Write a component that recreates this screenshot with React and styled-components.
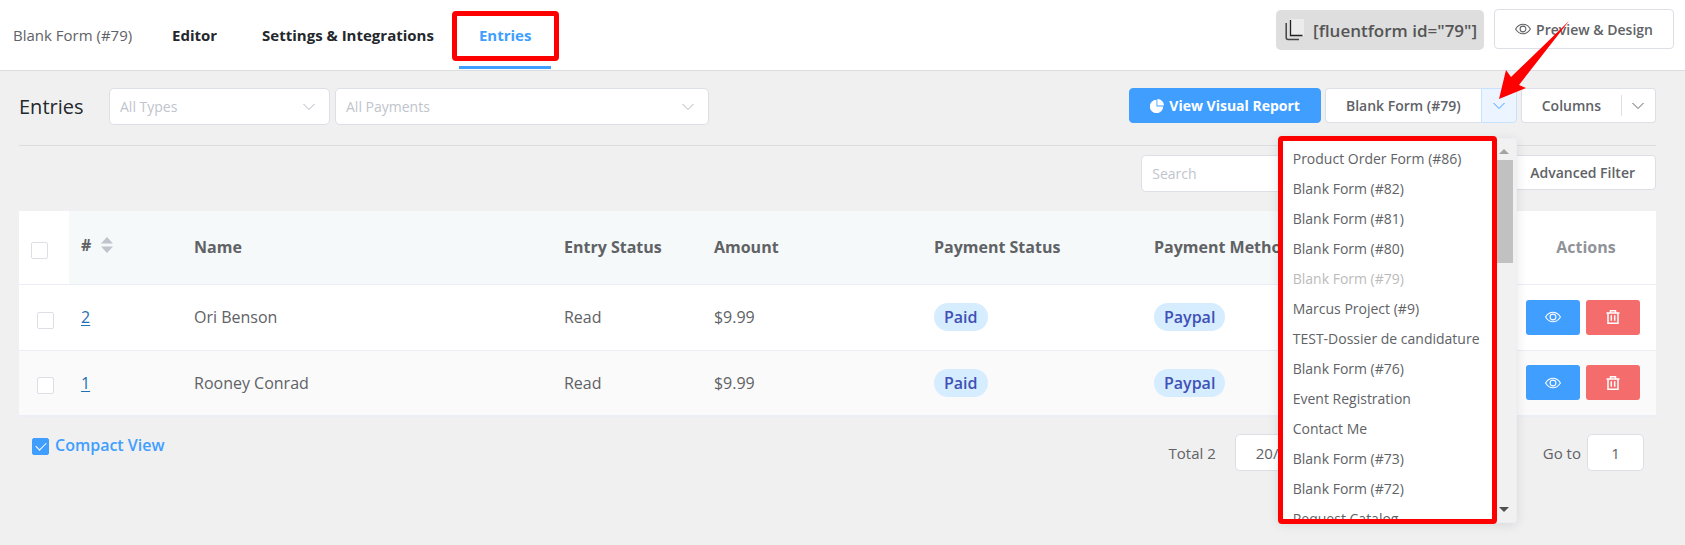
import React from 'react'
import styled, { createGlobalStyle, css } from 'styled-components'

const forms = [
  'Product Order Form (#86)',
  'Blank Form (#82)',
  'Blank Form (#81)',
  'Blank Form (#80)',
  'Blank Form (#79)',
  'Marcus Project (#9)',
  'TEST-Dossier de candidature',
  'Blank Form (#76)',
  'Event Registration',
  'Contact Me',
  'Blank Form (#73)',
  'Blank Form (#72)',
  'Request Catalog',
]

const entries = [
  { id: 2, name: 'Ori Benson', status: 'Read', amount: '$9.99', payment: 'Paid', method: 'Paypal' },
  { id: 1, name: 'Rooney Conrad', status: 'Read', amount: '$9.99', payment: 'Paid', method: 'Paypal' },
]

const ChevronIcon = () => (
  <svg width="14" height="14" viewBox="0 0 14 14" fill="none" stroke="currentColor">
    <path d="M1.500 4L7 9.500 12.500 4" />
  </svg>
)

const EyeIcon = () => (
  <svg width="16" height="16" viewBox="0 0 16 16" fill="none" stroke="currentColor" strokeWidth="1.1">
    <path d="M.6 8c1.900-3.200 4.400-4.800 7.400-4.800S13.500 4.800 15.400 8c-1.900 3.200-4.400 4.800-7.400 4.800S2.500 11.200.6 8z" />
    <circle cx="8" cy="8" r="2.900" />
  </svg>
)

const TrashIcon = () => (
  <svg width="16" height="16" viewBox="0 0 16 16" fill="none" stroke="currentColor" strokeWidth="1.500">
    <path d="M1.500 4h13M5.500 4V1.700h5V4M3 4v10.300h10V4M6.300 6.200v5.600M9.700 6.200v5.600" />
  </svg>
)

const PieIcon = () => (
  <svg width="14" height="14" viewBox="0 0 14 14" fill="currentColor">
    <path d="M6.500 .8v6.700h6.700A6.700 6.700 0 1 1 6.500 .8z" />
    <path d="M7.400 0A6.500 6.500 0 0 1 14 6.600H7.400z" />
  </svg>
)

const CopyIcon = () => (
  <svg width="20" height="22" viewBox="0 0 20 22" fill="none">
    <path d="M5 0h14v17H5z" fill="#ececec" />
    <path d="M5.500 1v15.500h12" stroke="#222" strokeWidth="1.300" />
    <path d="M1.200 4v14.500q0 2 2 2H14" stroke="#444" strokeWidth="1.500" />
  </svg>
)

const App = () => {
  return (
    <Page>
      <GlobalStyle />
      <TopBar>
        <FormName>Blank Form (#79)</FormName>
        <Tabs>
          <Tab href="#editor">Editor</Tab>
          <Tab href="#settings">Settings &amp; Integrations</Tab>
          <Tab href="#entries" $active>
            Entries
            <TabMark />
          </Tab>
        </Tabs>
        <TopActions>
          <Shortcode type="button">
            <CopyIcon />
            [fluentform id="79"]
          </Shortcode>
          <PreviewLink href="#preview">
            <EyeIcon />
            Preview &amp; Design
          </PreviewLink>
        </TopActions>
      </TopBar>

      <Main>
        <Toolbar>
          <Title>Entries</Title>
          <SelectWrap $width="221px">
            <Select aria-label="Entry type">
              <option>All Types</option>
            </Select>
            <ChevronIcon />
          </SelectWrap>
          <SelectWrap $width="374px">
            <Select aria-label="Payment status">
              <option>All Payments</option>
            </Select>
            <ChevronIcon />
          </SelectWrap>
          <ToolbarRight>
            <ReportButton type="button">
              <PieIcon />
              View Visual Report
            </ReportButton>
            <SplitButton>
              <SplitMain type="button">Blank Form (#79)</SplitMain>
              <SplitToggle type="button" aria-label="Switch form" $open>
                <ChevronIcon />
              </SplitToggle>
              <Menu>
                <MenuList>
                  {forms.map((form) => (
                    <li key={form}>
                      <MenuItem type="button" disabled={form === 'Blank Form (#79)'}>
                        {form}
                      </MenuItem>
                    </li>
                  ))}
                </MenuList>
                <ScrollTrack>
                  <ScrollArrow />
                  <ScrollThumb />
                  <ScrollArrow $down />
                </ScrollTrack>
                <MenuMark />
              </Menu>
              <Arrow width="72" height="80" viewBox="0 0 72 80">
                <path d="M71 1L21 65l7 3L1 79 8 50l5 7z" fill="#ff0000" />
              </Arrow>
            </SplitButton>
            <SplitButton>
              <SplitMain type="button">Columns</SplitMain>
              <SplitToggle type="button" aria-label="Choose columns">
                <ChevronIcon />
              </SplitToggle>
            </SplitButton>
          </ToolbarRight>
        </Toolbar>

        <Filters>
          <SearchInput type="search" placeholder="Search" aria-label="Search entries" />
          <Button type="button">Advanced Filter</Button>
        </Filters>

        <Table>
          <colgroup>
            <Col $width="50px" />
            <Col $width="113px" />
            <Col $width="22.6%" />
            <Col $width="150px" />
            <Col $width="220px" />
            <Col $width="220px" />
            <Col />
            <Col $width="140px" />
          </colgroup>
          <thead>
            <tr>
              <Th $plain>
                <Checkbox type="checkbox" aria-label="Select all entries" />
              </Th>
              <Th>
                <Sortable>
                  #
                  <svg width="12" height="16" viewBox="0 0 12 16">
                    <path d="M6 0l6 6.500H0zM6 16l6-6.500H0z" fill="#c0c4cc" />
                  </svg>
                </Sortable>
              </Th>
              <Th>Name</Th>
              <Th>Entry Status</Th>
              <Th>Amount</Th>
              <Th>Payment Status</Th>
              <Th>Payment Method</Th>
              <Th $plain $center>Actions</Th>
            </tr>
          </thead>
          <tbody>
            {entries.map((entry) => (
              <Row key={entry.id}>
                <Td $left="18px">
                  <Checkbox type="checkbox" aria-label={`Select entry ${entry.id}`} />
                </Td>
                <Td>
                  <EntryLink href={`#entry-${entry.id}`}>{entry.id}</EntryLink>
                </Td>
                <Td>{entry.name}</Td>
                <Td>{entry.status}</Td>
                <Td>{entry.amount}</Td>
                <Td>
                  <Pill>{entry.payment}</Pill>
                </Td>
                <Td>
                  <Pill>{entry.method}</Pill>
                </Td>
                <Td $left="10px">
                  <RowActions>
                    <IconButton type="button" aria-label="View entry">
                      <EyeIcon />
                    </IconButton>
                    <IconButton type="button" aria-label="Delete entry" $danger>
                      <TrashIcon />
                    </IconButton>
                  </RowActions>
                </Td>
              </Row>
            ))}
          </tbody>
        </Table>

        <Footer>
          <CompactLabel>
            <Checkbox type="checkbox" defaultChecked />
            Compact View
          </CompactLabel>
          <Pagination>
            <span>Total 2</span>
            <PageSize aria-label="Page size">
              <option>20/page</option>
            </PageSize>
            <GoTo>
              Go to
              <PageInput type="text" defaultValue="1" />
            </GoTo>
          </Pagination>
        </Footer>
      </Main>
    </Page>
  )
}

const GlobalStyle = createGlobalStyle`
    * {
        box-sizing: border-box;
    }
    body {
        margin: 0;
        background: #f0f0f0;
        color: #606266;
        font-family: "Open Sans", "Noto Sans", sans-serif;
        font-size: 15px;
    }
    button, input, select {
        font-family: inherit;
    }
`;

// red frame drawn over the highlighted parts
const markFrame = css`
    position: absolute;
    z-index: 1;
    border: 5px solid #ff0000;
    border-radius: 4px;
    pointer-events: none;
`;

const Page = styled.div`
    min-height: 100vh;
`;

const TopBar = styled.header`
    display: flex;
    height: 71px;
    padding-left: 13px;
    background: #fff;
    border-bottom: 1px solid #dcdde0;
`;

const FormName = styled.div`
    width: 139px;
    line-height: 70px;
    white-space: nowrap;
`;

const Tabs = styled.nav`
    display: flex;
    gap: 5px;
`;

const Tab = styled.a`
    position: relative;
    height: 69px;
    padding: 0 20px;
    line-height: 70px;
    border-bottom: 3px solid ${props => props.$active ? '#409eff' : 'transparent'};
    color: ${props => props.$active ? '#409eff' : '#24282d'};
    font-weight: 700;
    text-decoration: none;
    white-space: nowrap;
`;

const TabMark = styled.span`
    ${markFrame}
    top: 11px;
    left: -7px;
    right: -8px;
    height: 50px;
`;

const TopActions = styled.div`
    display: flex;
    align-items: flex-start;
    gap: 10px;
    margin-left: auto;
    padding: 9px 11px 0 0;
`;

const Shortcode = styled.button`
    display: flex;
    align-items: center;
    gap: 8px;
    height: 40px;
    margin-top: 1px;
    padding: 0 7px 0 9px;
    border: 0;
    border-radius: 5px;
    background: #dedede;
    color: #555;
    font-size: 17px;
    font-weight: 600;
`;

const buttonBase = css`
    display: flex;
    align-items: center;
    gap: 5px;
    height: 35px;
    padding: 0 20px;
    border: 1px solid #dcdfe6;
    border-radius: 4px;
    background: #fff;
    color: #606266;
    font-size: 14px;
    font-weight: 600;
    white-space: nowrap;
`;

const Button = styled.button`
    ${buttonBase}
`;

const PreviewLink = styled.a`
    ${buttonBase}
    height: 40px;
    text-decoration: none;
`;

const Main = styled.main`
    padding: 0 29px 0 19px;
`;

const Toolbar = styled.div`
    display: flex;
    align-items: flex-start;
    gap: 5px;
    height: 75px;
    padding-top: 17px;
    border-bottom: 1px solid #dcdde0;
`;

const Title = styled.h1`
    width: 85px;
    margin: 0;
    color: #23282d;
    font-size: 20px;
    font-weight: 500;
    line-height: 37px;
`;

const SelectWrap = styled.div`
    position: relative;
    width: ${props => props.$width};
    svg {
        position: absolute;
        top: 12px;
        right: 14px;
        color: #b4b8c0;
        pointer-events: none;
    }
`;

const field = css`
    height: 37px;
    border: 1px solid #dcdfe6;
    border-radius: 5px;
    background: #fff;
    color: #606266;
    font-size: 14px;
`;

const Select = styled.select`
    ${field}
    appearance: none;
    width: 100%;
    padding: 0 10px;
    color: #c0c4cc;
`;

const ToolbarRight = styled.div`
    display: flex;
    gap: 4px;
    margin-left: auto;
`;

const ReportButton = styled(Button)`
    background: #409eff;
    border-color: #409eff;
    color: #fff;
    font-weight: 700;
`;

const SplitButton = styled.div`
    position: relative;
    display: flex;
`;

const SplitMain = styled(Button)`
    border-right: 0;
    border-radius: 4px 0 0 4px;
`;

const SplitToggle = styled(Button)`
    position: relative;
    width: 35px;
    padding: 0 10px;
    border-left: 0;
    border-radius: 0 4px 4px 0;
    ${props => props.$open ? css`
        width: 36px;
        border: 1px solid #c6e2ff;
        background: #ecf5ff;
        color: #409eff;
    ` : css`
        &::before {
            content: '';
            position: absolute;
            top: 6px;
            bottom: 6px;
            left: 0;
            width: 1px;
            background: #dcdfe6;
        }
    `}
`;

const Menu = styled.div`
    position: absolute;
    z-index: 2;
    top: 50px;
    right: 0;
    display: flex;
    width: 239px;
    height: 385px;
    background: #fff;
    border: 1px solid #ebeef5;
    border-radius: 4px;
    box-shadow: 0 2px 12px rgba(0, 0, 0, 0.1);
`;

const MenuList = styled.ul`
    flex: 1;
    margin: 0;
    padding: 4px 0 0;
    overflow: hidden;
    list-style: none;
`;

const MenuItem = styled.button`
    display: block;
    width: 100%;
    height: 30px;
    padding: 0 14px;
    border: 0;
    background: none;
    color: #606266;
    font-size: 14px;
    text-align: left;
    white-space: nowrap;
    &:disabled {
        color: #bbbbbb;
    }
`;

const ScrollTrack = styled.div`
    display: flex;
    flex-direction: column;
    align-items: center;
    width: 20px;
    padding: 10px 3px 10px 0;
    background: #f1f1f1;
`;

const ScrollArrow = styled.div`
    margin-top: ${props => props.$down ? 'auto' : '0'};
    border: 5px solid transparent;
    border-top: ${props => props.$down ? '5px solid #505050' : '0'};
    border-bottom: ${props => props.$down ? '0' : '5px solid #a3a3a3'};
`;

const ScrollThumb = styled.div`
    width: 17px;
    height: 103px;
    margin-top: 6px;
    background: #c1c1c1;
`;

const MenuMark = styled.div`
    ${markFrame}
    top: -3px;
    bottom: -2px;
    left: -1px;
    right: 19px;
`;

const Arrow = styled.svg`
    position: absolute;
    z-index: 3;
    top: -68px;
    right: -53px;
    pointer-events: none;
`;

const Filters = styled.div`
    display: flex;
    justify-content: flex-end;
    gap: 5px;
    padding: 9px 0 19px;
`;

const SearchInput = styled.input`
    ${field}
    width: 363px;
    padding: 0 10px;
    &::placeholder {
        color: #c0c4cc;
    }
`;

const Table = styled.table`
    width: 100%;
    table-layout: fixed;
    border-collapse: collapse;
    border-bottom: 2px solid #ebeef5;
    background: #fff;
    font-size: 16px;
`;

const Col = styled.col`
    width: ${props => props.$width || 'auto'};
`;

const Th = styled.th`
    height: 73px;
    padding: 0 12px;
    border-bottom: 1px solid #ebeef5;
    background: ${props => props.$plain ? '#fff' : '#f5f9f9'};
    color: ${props => props.$center ? '#909399' : '#606266'};
    font-weight: 700;
    text-align: ${props => props.$center ? 'center' : 'left'};
    white-space: nowrap;
`;

const Sortable = styled.div`
    display: flex;
    align-items: center;
    gap: 10px;
    padding-bottom: 4px;
`;

const Row = styled.tr`
    &:nth-child(even) {
        background: #fafafa;
    }
`;

const Td = styled.td`
    height: 66px;
    padding: 0 0 0 ${props => props.$left || '12px'};
    border-bottom: 1px solid #ebeef5;
`;

const Checkbox = styled.input`
    appearance: none;
    display: block;
    flex: none;
    width: 17px;
    height: 17px;
    margin: 6px 0 0;
    border: 1px solid #dcdfe6;
    border-radius: 2px;
    background: #fff;
    &:checked {
        margin-top: 3px;
        border-color: #409eff;
        background: #409eff;
    }
    &:checked::after {
        content: '';
        display: block;
        width: 5px;
        height: 9px;
        margin: 1px 5px;
        border: solid #fff;
        border-width: 0 1px 1px 0;
        transform: rotate(45deg);
    }
`;

const EntryLink = styled.a`
    color: #2271b1;
    text-underline-offset: 2px;
`;

const Pill = styled.span`
    display: inline-block;
    padding: 0 10px;
    border-radius: 14px;
    background: #d6ecff;
    color: #3f51b5;
    font-weight: 600;
    line-height: 28px;
`;

const RowActions = styled.div`
    display: flex;
    gap: 6px;
`;

const IconButton = styled.button`
    display: flex;
    align-items: center;
    justify-content: center;
    width: 54px;
    height: 35px;
    border: 0;
    border-radius: 3px;
    background: ${props => props.$danger ? '#f56c6c' : '#409eff'};
    color: #fff;
`;

const Footer = styled.div`
    display: flex;
    align-items: flex-start;
    justify-content: space-between;
    padding: 17px 12px 50px 13px;
`;

const CompactLabel = styled.label`
    display: flex;
    align-items: center;
    gap: 6px;
    color: #409eff;
    font-size: 16px;
    font-weight: 600;
`;

const Pagination = styled.div`
    display: flex;
    align-items: center;
    gap: 19px;
`;

const PageSize = styled.select`
    ${field}
    appearance: none;
    width: 110px;
    padding: 0 20px;
    font-size: 15px;
`;

const GoTo = styled.label`
    display: flex;
    align-items: center;
    gap: 6px;
    margin-left: 179px;
`;

const PageInput = styled.input`
    ${field}
    width: 57px;
    text-align: center;
    font-size: 15px;
`;

export default App
